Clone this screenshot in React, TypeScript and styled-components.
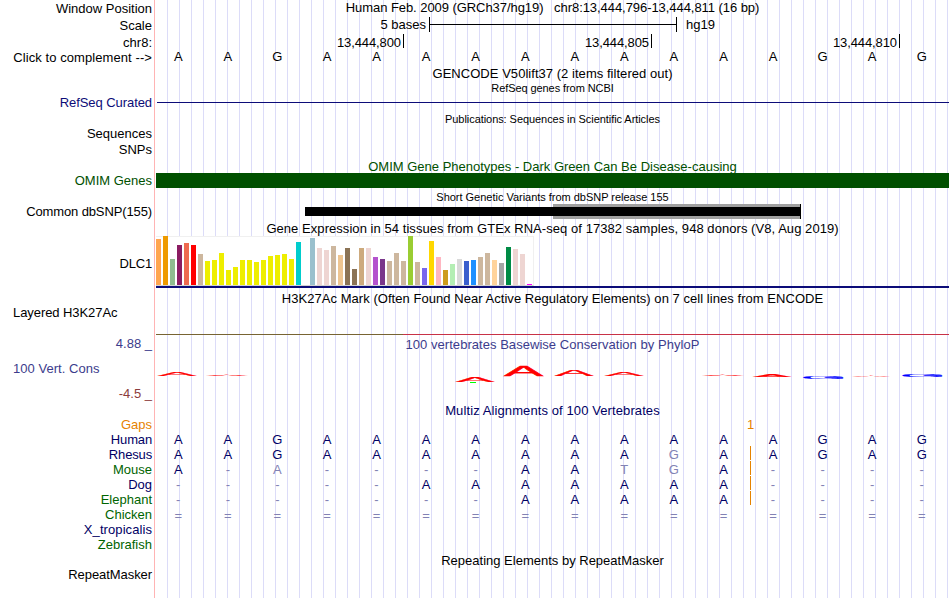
import React, { FC } from 'react';
import styled, { createGlobalStyle } from 'styled-components';

const GlobalStyle = createGlobalStyle`
  body {
    margin: 0;
    background: #fff;
    overflow: hidden;
  }
`;

const colors = {
  black: '#000',
  navy: '#0c0c78',
  human: '#000064',
  green: '#005000',
  species: '#006400',
  cons: '#3c3c8c',
  negative: '#8c3c3c',
  orange: '#e68200',
  dim: '#8282b4'
};

const SBrowser = styled.div`
  display: flex;
  width: 949px;
  height: 598px;

  font: 13px/15px 'Liberation Sans', Arial, sans-serif;
  color: ${colors.black};
  white-space: pre;
  overflow: hidden;
`;

const SLabels = styled.div`
  display: flex;
  flex-direction: column;
  width: 154px;
  flex: none;
  padding-top: 1px;
  box-sizing: border-box;
`;

const SLabel = styled.div<{ $gap: number, $color?: string, $left?: boolean, $spacing?: number }>`
  flex: none;
  height: 15px;
  margin-top: ${({ $gap }) => $gap}px;
  padding: 0 2px 0 13px;

  color: ${({ $color }) => $color || colors.black};
  letter-spacing: ${({ $spacing }) => $spacing || 0}px;
  text-align: ${({ $left }) => $left ? 'left' : 'right'};
`;

const STracks = styled.div`
  display: flex;
  flex-direction: column;
  flex: 1;
  padding-left: 1px;

  border-left: 1px solid #ffb4b4;
  background: repeating-linear-gradient(90deg, #dcdcf8 0 1px, transparent 1px 12px) 12px 0 no-repeat;
`;

const STitle = styled.div<{ $gap?: number, $color?: string, $small?: boolean, $height?: number, $spacing?: number }>`
  flex: none;
  height: ${({ $small, $height }) => $height || ($small ? 13 : 15)}px;
  margin-top: ${({ $gap }) => $gap || 0}px;

  color: ${({ $color }) => $color || colors.black};
  font-size: ${({ $small }) => $small ? 11 : 13}px;
  line-height: ${({ $small }) => $small ? 13 : 15}px;
  letter-spacing: ${({ $spacing }) => $spacing || 0}px;
  text-align: center;
`;

const SScale = styled.div`
  display: flex;
  height: 15px;
  margin-top: 2px;

  .name {
    width: 270px;
    margin-right: 3px;
    text-align: right;
  }

  .ruler {
    display: flex;
    align-items: center;
    width: 246px;
    border: solid #000;
    border-width: 0 1px;
  }

  .ruler::before {
    content: '';
    flex: 1;
    height: 1px;
    background: #000;
  }

  .assembly {
    margin-left: 9px;
  }
`;

const SPositions = styled.div`
  display: grid;
  grid-template-columns: repeat(3, 248px) 1fr;
  height: 15px;
  margin-top: 2px;

  span {
    height: 14px;
    padding: 1px 2px 0 0;
    border-right: 1px solid #000;
    box-sizing: border-box;
    letter-spacing: -0.1px;
    text-align: right;
  }
`;

const SBases = styled.div<{ $color?: string, $shift?: number }>`
  display: grid;
  grid-template-columns: repeat(16, 1fr);
  flex: none;
  height: 15px;
  padding-top: ${({ $shift }) => $shift || 0}px;
  box-sizing: border-box;

  color: ${({ $color }) => $color || colors.black};
  text-align: center;
`;

const SBase = styled.span<{ $dim?: boolean, $insert?: boolean }>`
  height: 14px;
  margin-top: ${({ $insert }) => $insert ? -1 : 0}px;
  padding: ${({ $insert }) => $insert ? '1px 4px 0 0' : '0 5px 0 0'};
  box-sizing: border-box;

  border-right: ${({ $insert }) => $insert ? `1px solid ${colors.orange}` : 0};
  ${({ $dim }) => $dim ? `color: ${colors.dim};` : ''}
`;

const SGap = styled.div`
  height: 15px;
  padding-left: 591px;
  color: ${colors.orange};
`;

const SLine = styled.div<{ $gap?: number, $height: number, $color: string, $inset?: number }>`
  flex: none;
  height: ${({ $height }) => $height}px;
  margin: ${({ $gap }) => $gap || 0}px 0 0 ${({ $inset }) => $inset || 0}px;
  background: ${({ $color }) => $color};
`;

const SVariant = styled.div`
  display: flex;
  align-items: center;
  height: 15px;
  padding-left: 149px;

  .start {
    width: 248px;
    height: 9px;
    background: #000;
  }

  .end {
    display: flex;
    align-items: center;
    width: 247px;
    height: 15px;
    border-right: 1px solid #000;
    background: #a0a0a0;
  }

  .end::before {
    content: '';
    flex: 1;
    height: 9px;
    background: #000;
  }
`;

const SExpression = styled.div`
  display: flex;
  align-items: flex-end;
  gap: 2px;
  width: 378px;
  height: 50px;
  box-sizing: border-box;

  border-right: 1px solid #f0f0f0;
  border-bottom: 1px solid #d2d2d2;
  background: linear-gradient(#f0f0f0 1px, #fff 1px);
`;

const SBar = styled.div`
  flex: none;
  width: 5px;
`;

const SConservation = styled.svg`
  flex: none;
  width: 793px;
  height: 51px;
`;

type TLabel = { text: string, gap: number, color?: string, left?: boolean, spacing?: number };

const labels: TLabel[] = [
  { text: 'Window Position', gap: 0 },
  { text: 'Scale', gap: 2 },
  { text: 'chr8:', gap: 2 },
  { text: 'Click to complement -->', gap: 0, spacing: 0.08 },
  { text: 'RefSeq Curated', gap: 30, color: colors.navy, spacing: -0.07 },
  { text: 'Sequences', gap: 16 },
  { text: 'SNPs', gap: 1 },
  { text: 'OMIM Genes', gap: 16, color: colors.green },
  { text: 'Common dbSNP(155)', gap: 16, spacing: -0.12 },
  { text: 'DLC1', gap: 37, spacing: -0.2 },
  { text: 'Layered H3K27Ac', gap: 34, left: true, spacing: -0.07 },
  { text: '4.88 _', gap: 16, color: colors.cons },
  { text: '100 Vert. Cons', gap: 10, color: colors.cons, left: true, spacing: 0.04 },
  { text: '-4.5 _', gap: 10, color: colors.negative },
  { text: 'Gaps', gap: 16, color: colors.orange },
  { text: 'Human', gap: 0, color: colors.human, spacing: -0.15 },
  { text: 'Rhesus', gap: 0, color: colors.human, spacing: -0.15 },
  { text: 'Mouse', gap: 0, color: colors.species },
  { text: 'Dog', gap: 0, color: colors.human },
  { text: 'Elephant', gap: 0, color: colors.species },
  { text: 'Chicken', gap: 0, color: colors.species },
  { text: 'X_tropicalis', gap: 0, color: colors.human, spacing: 0.08 },
  { text: 'Zebrafish', gap: 0, color: colors.species },
  { text: 'RepeatMasker', gap: 15, spacing: -0.07 }
];

// Lower case letters differ from the reference genome
const alignments = [
  { name: 'human', bases: 'AAGAAAAAAAAAAGAG', insert: false },
  { name: 'rhesus', bases: 'AAGAAAAAAAgAAGAG', insert: true },
  { name: 'mouse', bases: 'A-a----AAtgA----', insert: true },
  { name: 'dog', bases: '-----AAAAAAA----', insert: true },
  { name: 'elephant', bases: '-------AAAAA----', insert: true },
  { name: 'chicken', bases: '================', insert: false, shift: 1 }
];

const tissues: [number, string][] = [
  [46, '#ffa54f'], [49, '#ee9a00'], [26, '#8fbc8f'], [40, '#8b1c62'], [42, '#ee6a50'], [40, '#ff0000'],
  [31, '#cdb79e'], [24, '#eeee00'], [25, '#eeee00'], [32, '#eeee00'], [15, '#eeee00'], [18, '#eeee00'],
  [25, '#eeee00'], [25, '#eeee00'], [23, '#eeee00'], [25, '#eeee00'], [29, '#eeee00'], [30, '#eeee00'],
  [31, '#eeee00'], [26, '#eeee00'], [43, '#00cdcd'], [0, '#ee82ee'], [47, '#9ac0cd'], [37, '#eed5d2'],
  [35, '#eed5d2'], [39, '#cdb79e'], [30, '#eec591'], [37, '#8b7355'], [16, '#8b7355'], [37, '#cdaa7d'],
  [37, '#eed5d2'], [28, '#b452cd'], [26, '#7a378b'], [24, '#cdb79e'], [32, '#cdb79e'], [24, '#cdb79e'],
  [49, '#9acd32'], [23, '#cdb79e'], [17, '#7a67ee'], [44, '#ffd700'], [28, '#ffb6c1'], [15, '#cd9b1d'],
  [21, '#b4eeb4'], [26, '#d9d9d9'], [24, '#3a5fcd'], [25, '#1e90ff'], [28, '#cdb79e'], [32, '#cdb79e'],
  [25, '#ffd39b'], [22, '#a6a6a6'], [38, '#008b45'], [36, '#eed5d2'], [31, '#eed5d2'], [1, '#ff00ff']
];

// Letter, left, baseline, width, height and stroke within the conservation track
const logo: [string, number, number, number, number, number][] = [
  ['A', 2, 24, 38, 4, 0.5],
  ['A', 52, 24, 38, 1, 1.2],
  ['A', 300, 30, 38, 5, 0.5],
  ['A', 348, 24, 39, 10, 0.5],
  ['A', 399, 24, 38, 6, 0.5],
  ['A', 449, 24, 38, 4, 0.5],
  ['A', 548, 24, 38, 1, 1.2],
  ['A', 597, 25, 38, 3, 0.4],
  ['G', 645, 27, 46, 2, 0.5],
  ['A', 696, 25, 38, 1.7, 0.2],
  ['G', 744, 25, 46, 3, 0.5]
];

const glyphWidth: { [key: string]: number } = { A: 13.3, G: 15.6 };

const Bases: FC<{ bases: string, color?: string, insert?: boolean, shift?: number }> = ({
  bases,
  color,
  insert,
  shift
}) => (
  <SBases $color={color} $shift={shift}>
    {bases.split('').map((base, i) => (
      <SBase key={i} $dim={!/[ACGT]/.test(base)} $insert={insert && i === 11}>{base.toUpperCase()}</SBase>
    ))}
  </SBases>
);

const Conservation: FC = () => (
  <SConservation viewBox='0 0 793 51'>
    {logo.map(([letter, x, y, width, height, stroke]) => (
      <text
        key={x}
        fontSize='20'
        fill={letter === 'A' ? '#ff0000' : '#0000ff'}
        stroke={letter === 'A' ? '#ff0000' : '#0000ff'}
        strokeWidth={stroke}
        transform={`translate(${x} ${y}) scale(${width / glyphWidth[letter]} ${height / 13.8})`}
      >
        {letter}
      </text>
    ))}
    <rect x='314' y='30' width='6' height='1' fill='#00ff00' />
  </SConservation>
);

const App: FC = () => (
  <>
    <GlobalStyle />
    <SBrowser>
      <SLabels>
        {labels.map(({ text, gap, color, left, spacing }) => (
          <SLabel key={text} $gap={gap} $color={color} $left={left} $spacing={spacing}>{text}</SLabel>
        ))}
      </SLabels>
      <STracks>
        <STitle $spacing={-0.06}>Human Feb. 2009 (GRCh37/hg19)   chr8:13,444,796-13,444,811 (16 bp)</STitle>
        <SScale>
          <span className='name'>5 bases</span>
          <span className='ruler' />
          <span className='assembly'>hg19</span>
        </SScale>
        <SPositions>
          <span>13,444,800</span>
          <span>13,444,805</span>
          <span>13,444,810</span>
        </SPositions>
        <Bases bases='AAGAAAAAAAAAAGAG' />
        <STitle $gap={2} $spacing={0.04}>GENCODE V50lift37 (2 items filtered out)</STitle>
        <STitle $small $gap={1} $spacing={-0.08}>RefSeq genes from NCBI</STitle>
        <SLine $gap={7} $height={1} $color={colors.navy} $inset={1} />
        <STitle $small $gap={10} $spacing={-0.06}>Publications: Sequences in Scientific Articles</STitle>
        <STitle $gap={33} $height={14} $color={colors.green}>OMIM Gene Phenotypes - Dark Green Can Be Disease-causing</STitle>
        <SLine $height={15} $color={colors.green} />
        <STitle $small $gap={3} $spacing={-0.02}>Short Genetic Variants from dbSNP release 155</STitle>
        <SVariant>
          <span className='start' />
          <span className='end' />
        </SVariant>
        <STitle $gap={2} $spacing={0.055}>Gene Expression in 54 tissues from GTEx RNA-seq of 17382 samples, 948 donors (V8, Aug 2019)</STitle>
        <SExpression>
          {tissues.map(([height, color], i) => <SBar key={i} style={{ height, background: color }} />)}
        </SExpression>
        <SLine $height={2} $color={colors.navy} />
        <STitle $gap={3} $spacing={0.045}>H3K27Ac Mark (Often Found Near Active Regulatory Elements) on 7 cell lines from ENCODE</STitle>
        <SLine $gap={28} $height={1} $color='linear-gradient(90deg, #786432 31.2%, #c83246 31.2%)' />
        <STitle $gap={2} $color={colors.cons} $spacing={0.04}>100 vertebrates Basewise Conservation by PhyloP</STitle>
        <Conservation />
        <STitle $height={14} $color={colors.human} $spacing={0.1}>Multiz Alignments of 100 Vertebrates</STitle>
        <SGap>1</SGap>
        {alignments.map(({ name, bases, insert, shift }) => (
          <Bases key={name} bases={bases} color={colors.human} insert={insert} shift={shift} />
        ))}
        <STitle $gap={31}>Repeating Elements by RepeatMasker</STitle>
      </STracks>
    </SBrowser>
  </>
);

export default App;
